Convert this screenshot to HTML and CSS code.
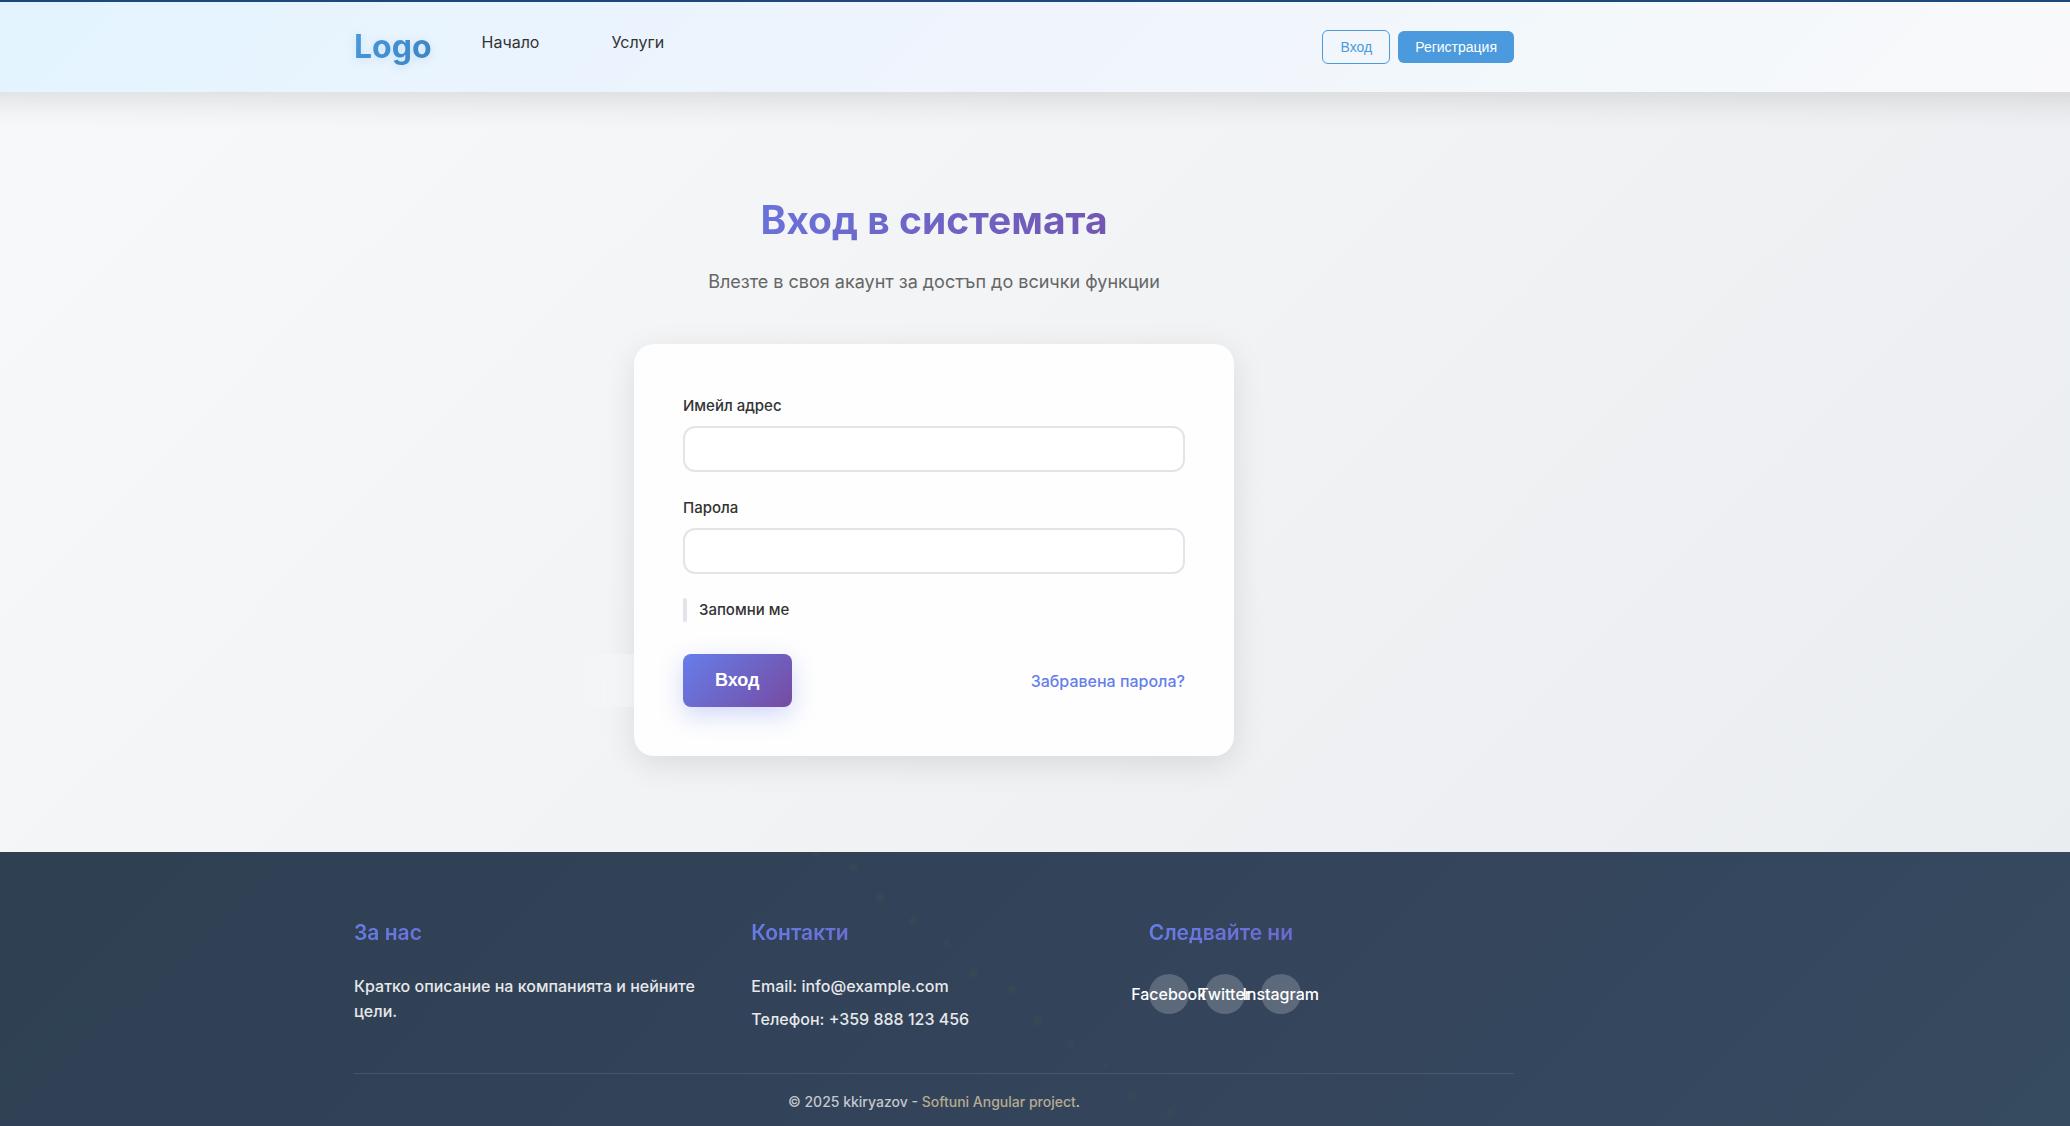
FILE: index.html
```html
<!DOCTYPE html>
<html lang="bg">
<head>
<meta charset="utf-8">
<meta name="viewport" content="width=device-width, initial-scale=1">
<title>Вход в системата</title>
<link rel="stylesheet" href="styles.css">
</head>
<body>
<header class="header">
  <div class="container header-inner">
    <a class="logo" href="#">Logo</a>
    <nav class="nav">
      <a href="#">Начало</a>
      <a href="#">Услуги</a>
    </nav>
    <div class="header-actions">
      <button type="button" class="btn btn-outline">Вход</button>
      <button type="button" class="btn btn-solid">Регистрация</button>
    </div>
  </div>
</header>

<main class="main">
  <div class="container login">
    <h1 class="title">Вход в системата</h1>
    <p class="subtitle">Влезте в своя акаунт за достъп до всички функции</p>
    <form class="card">
      <div class="field">
        <label for="email">Имейл адрес</label>
        <input id="email" type="email" class="input">
      </div>
      <div class="field">
        <label for="password">Парола</label>
        <input id="password" type="password" class="input">
      </div>
      <div class="remember">
        <input id="remember" type="checkbox" class="check">
        <label for="remember">Запомни ме</label>
      </div>
      <div class="form-actions">
        <button type="submit" class="submit">Вход</button>
        <a class="forgot" href="#">Забравена парола?</a>
      </div>
    </form>
  </div>
</main>

<footer class="footer">
  <svg class="dots" viewBox="0 0 400 274" width="400" height="274" aria-hidden="true">
    <circle cx="16" cy="0" r="4"/><circle cx="54" cy="15" r="4"/><circle cx="80" cy="46" r="5"/>
    <circle cx="113" cy="69" r="4"/><circle cx="147" cy="91" r="3"/><circle cx="174" cy="121" r="5"/>
    <circle cx="212" cy="138" r="4"/><circle cx="238" cy="169" r="5"/><circle cx="271" cy="192" r="4"/>
    <circle cx="305" cy="213" r="3"/><circle cx="332" cy="244" r="5"/><circle cx="370" cy="261" r="4"/>
  </svg>
  <div class="container">
    <div class="footer-grid">
      <section>
        <h2>За нас</h2>
        <p>Кратко описание на компанията и нейните цели.</p>
      </section>
      <section>
        <h2>Контакти</h2>
        <p>Email: info@example.com</p>
        <p>Телефон: +359 888 123 456</p>
      </section>
      <section>
        <h2>Следвайте ни</h2>
        <div class="social">
          <a href="#">Facebook</a>
          <a href="#">Twitter</a>
          <a href="#">Instagram</a>
        </div>
      </section>
    </div>
    <p class="copyright">© 2025 kkiryazov - <a href="#">Softuni Angular project</a>.</p>
  </div>
</footer>
</body>
</html>
```
FILE: styles.css
```css
:root {
  --rail: 202px;
  --violet: linear-gradient(135deg, #667eea 0%, #764ba2 100%);
}

* {
  box-sizing: border-box;
}

body {
  margin: 0;
  min-height: 100vh;
  display: flex;
  flex-direction: column;
  overflow-x: hidden;
  font-family: Inter, "Noto Sans", sans-serif;
  font-size: 16px;
  line-height: 26px;
  color: #333;
  background: linear-gradient(135deg, #f8f9fa 0%, #e9ecef 100%);
}

h1, h2, p {
  margin: 0;
}

a {
  color: inherit;
  text-decoration: none;
}

.header, .main, .footer {
  padding-right: var(--rail);
}

.container {
  max-width: 1200px;
  margin: 0 auto;
  padding: 0 20px;
}

/* Header */
.header {
  position: relative;
  z-index: 1;
  border-top: 2px solid #1e4b7f;
  background: linear-gradient(135deg, #e3f4ff 0%, #f0f4fd 50%, #f3f8fb 75%, #f9f9fb 100%);
}

/* Shadow runs past both window edges so it stays even */
.header::before {
  content: "";
  position: absolute;
  z-index: -1;
  inset: 0 -40px;
  box-shadow: 0 8px 32px rgba(0, 0, 0, 0.12);
}

.header-inner {
  display: flex;
  align-items: center;
  height: 90px;
}

.logo {
  font-size: 32px;
  font-weight: 700;
  line-height: 40px;
  background: linear-gradient(135deg, #4a9add, #3c83c0);
  -webkit-background-clip: text;
  background-clip: text;
  color: transparent;
  filter: drop-shadow(0 2px 4px rgba(74, 154, 221, 0.2));
}

.nav {
  display: flex;
  gap: 72px;
  padding: 0 0 10px 50px;
}

.header-actions {
  display: flex;
  align-items: center;
  gap: 8px;
  margin-left: auto;
}

.btn {
  padding: 8px 17px;
  border: 0;
  border-radius: 6px;
  font: 14px/16px "Liberation Sans", Arial, sans-serif;
}

.btn-outline {
  border: 1px solid #4a9add;
  background: transparent;
  color: #4a9add;
}

.btn-solid {
  background: #4a9add;
  color: #fff;
}

/* Login */
.main {
  flex: 1;
}

.login {
  display: flex;
  flex-direction: column;
  align-items: center;
  padding-top: 96px;
  padding-bottom: 96px;
}

.title {
  width: 100%;
  max-width: 600px;
  margin-bottom: 16px;
  text-align: center;
  font-size: 39px;
  font-weight: 700;
  line-height: 64px;
  background: var(--violet);
  -webkit-background-clip: text;
  background-clip: text;
  color: transparent;
}

.subtitle {
  margin-bottom: 48px;
  font-size: 18px;
  line-height: 28px;
  color: #666;
}

.card {
  width: 100%;
  max-width: 600px;
  padding: 50px 49px 49px;
  border-radius: 20px;
  background: #fefefe;
  box-shadow: 0 8px 32px rgba(0, 0, 0, 0.1);
}

.field {
  display: flex;
  flex-direction: column;
  gap: 8px;
  margin-bottom: 24px;
}

.field label, .remember label {
  font-size: 15px;
  font-weight: 500;
  line-height: 24px;
}

.input {
  height: 46px;
  padding: 0 16px;
  border: 2px solid #e1e5e9;
  border-radius: 12px;
  background: #fff;
  font: inherit;
}

.remember {
  display: flex;
  align-items: center;
  gap: 12px;
  margin-bottom: 32px;
}

.check {
  appearance: none;
  width: 4px;
  height: 24px;
  margin: 0;
  border-radius: 2px;
  background: #e1e5e9;
}

.form-actions {
  display: flex;
  align-items: center;
  justify-content: space-between;
}

.submit {
  position: relative;
  padding: 16px 32px;
  border: 0;
  border-radius: 8px;
  background: var(--violet);
  box-shadow: 0 8px 24px rgba(102, 126, 234, 0.3);
  color: #fff;
  font: 700 18px/21px "Liberation Sans", Arial, sans-serif;
}

.submit::before {
  content: "";
  position: absolute;
  top: 0;
  left: -100%;
  width: 100%;
  height: 100%;
  background: linear-gradient(90deg, transparent, rgba(255, 255, 255, 0.3), transparent);
}

.forgot {
  font-weight: 500;
  color: #667eea;
}

/* Footer */
.footer {
  position: relative;
  overflow: hidden;
  background: linear-gradient(135deg, #2e4052 0%, #33435a 50%, #364a60 100%);
  color: #e6e8ea;
}

.dots {
  position: absolute;
  top: 0;
  left: 800px;
  fill: rgba(70, 100, 70, 0.15);
}

.footer .container {
  position: relative;
  padding-top: 64px;
}

.footer-grid {
  display: grid;
  grid-template-columns: repeat(3, 1fr);
  gap: 32px;
  min-height: 157px;
}

.footer h2 {
  margin-bottom: 24px;
  font-size: 21px;
  font-weight: 600;
  line-height: 34px;
  background: var(--violet);
  -webkit-background-clip: text;
  background-clip: text;
  color: transparent;
}

.footer section p {
  margin-bottom: 8px;
  font-weight: 500;
  line-height: 25px;
}

.social {
  display: flex;
  gap: 16px;
}

.social a {
  display: flex;
  align-items: center;
  justify-content: center;
  width: 40px;
  height: 40px;
  border-radius: 50%;
  background: rgba(255, 255, 255, 0.2);
  color: #fff;
  font-weight: 500;
}

.copyright {
  padding: 16px 0 12px;
  border-top: 1px solid rgba(255, 255, 255, 0.1);
  text-align: center;
  font-size: 14px;
  font-weight: 500;
  line-height: 24px;
  color: #c3c8ce;
}

.copyright a {
  color: #b5ab90;
}
```
